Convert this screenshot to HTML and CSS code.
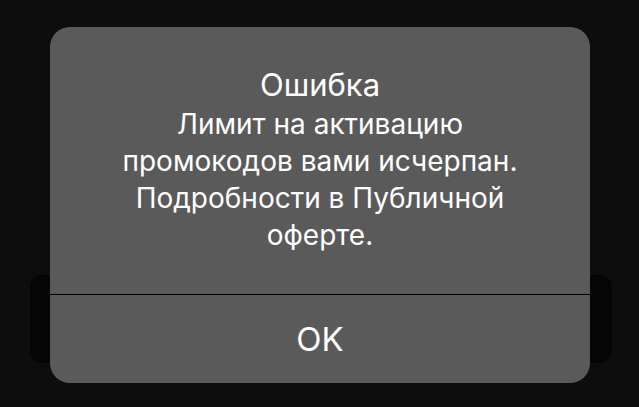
FILE: index.html
```html
<!DOCTYPE html>
<html lang="ru">
<head>
<meta charset="utf-8"/>
<title>Ошибка</title>
<link rel="stylesheet" href="styles.css">
</head>
<body>
<div class="Screen">
    <div class="Backdrop"></div>
    <div class="Alert">
        <div class="Message">
            <div class="Title">Ошибка</div>
            <div class="Text">Лимит на активацию<br>промокодов вами исчерпан.<br>Подробности в Публичной<br>оферте.</div>
        </div>
        <div class="Button">OK</div>
    </div>
</div>
</body>
</html>
```
FILE: styles.css
```css
html, body { margin: 0; height: 100%; background: #0d0d0d; }
body { font-family: Inter, Roboto, "Noto Sans", sans-serif; color: #fff; }
.Screen { position: relative; height: 407px; padding: 27px 49px 0 50px; box-sizing: border-box; }
.Backdrop { position: absolute; left: 30px; top: 275px; width: 582px; height: 88px; background: #050505; border-radius: 12px; }
.Alert { position: relative; width: 540px; height: 356px; background: #5a5a5a; border-radius: 20px; display: flex; flex-direction: column; overflow: hidden; }
.Message { height: 268px; border-bottom: 1px solid #000; text-align: center; padding-top: 39px; box-sizing: border-box; }
.Title { font-size: 31px; line-height: 38px; }
.Text { font-size: 28px; line-height: 37px; margin-top: 2px; }
.Button { flex: 1; display: flex; align-items: center; justify-content: center; font-size: 33px; }
```
